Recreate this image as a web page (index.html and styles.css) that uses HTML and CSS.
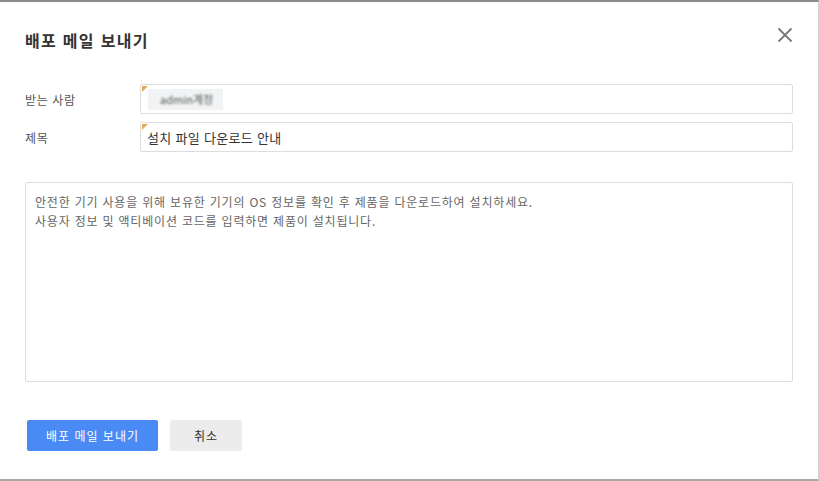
FILE: index.html
```html
<!DOCTYPE html>
<html lang="ko">
  <head>
    <title>배포 메일 보내기</title>
    <meta charset="utf-8">
    <meta name="viewport" content="width=device-width, initial-scale=1.0">
    <link rel="stylesheet" href="styles.css">
  </head>
  <body>
    <div class="dialog">
      <div class="dialog-header">
        <h2>배포 메일 보내기</h2>
        <button class="close-button" aria-label="닫기">
          <svg width="16" height="16" viewBox="0 0 16 16">
            <path d="M1.5 1.5 L14.5 14.5 M14.5 1.5 L1.5 14.5" stroke="#777" stroke-width="1.8" fill="none"/>
          </svg>
        </button>
      </div>

      <div class="form">
        <div class="form-row">
          <label>받는 사람</label>
          <div class="field">
            <span class="recipient"><span class="masked">admin계정</span></span>
          </div>
        </div>
        <div class="form-row">
          <label>제목</label>
          <div class="field">설치 파일 다운로드 안내</div>
        </div>
      </div>

      <div class="message">
        <p>안전한 기기 사용을 위해 보유한 기기의 OS 정보를 확인 후 제품을 다운로드하여 설치하세요.</p>
        <p>사용자 정보 및 액티베이션 코드를 입력하면 제품이 설치됩니다.</p>
      </div>

      <div class="dialog-buttons">
        <button class="btn primary">배포 메일 보내기</button>
        <button class="btn secondary">취소</button>
      </div>
    </div>
  </body>
</html>
```

FILE: styles.css
```css
* {
  margin: 0;
  padding: 0;
  box-sizing: border-box;
}

body {
  font-family: "Noto Sans CJK KR", "Noto Sans", sans-serif;
  background: #fff;
  width: 819px;
  height: 481px;
  overflow: hidden;
}

.dialog {
  height: 481px;
  border-top: 2px solid #8c8c8c;
  border-bottom: 2px solid #a8a8a8;
  border-right: 1px solid #d0d0d0;
  padding: 28px 25px 0 25px;
  background: #fff;
}

.dialog-header {
  display: flex;
  align-items: center;
  justify-content: space-between;
  height: 20px;
}

.dialog-header h2 {
  font-size: 16px;
  font-weight: 700;
  color: #333;
  line-height: 20px;
  letter-spacing: 1.3px;
}

.close-button {
  background: none;
  border: none;
  width: 16px;
  height: 16px;
  margin-top: -10px;
  cursor: pointer;
}

.form {
  margin-top: 34px;
  display: flex;
  flex-direction: column;
  gap: 8px;
}

.form-row {
  display: flex;
  align-items: center;
}

.form-row label {
  width: 115px;
  font-size: 12px;
  color: #555;
  letter-spacing: 0.6px;
}

.field {
  flex: 1;
  height: 30px;
  border: 1px solid #ddd;
  border-radius: 2px;
  position: relative;
  display: flex;
  align-items: center;
  padding-left: 6px;
  font-size: 13px;
  color: #333;
  letter-spacing: 0.3px;
}

/* orange corner marker for required fields */
.field::before {
  content: '';
  position: absolute;
  top: 1px;
  left: 1px;
  border-top: 6px solid #e2aa5c;
  border-right: 6px solid transparent;
}

.recipient {
  display: inline-block;
  background: #f1f3f4;
  height: 21px;
  line-height: 21px;
  padding: 0 10px 0 12px;
  margin-left: 1px;
  font-size: 11px;
  letter-spacing: 0;
}

/* recipient address is masked */
.recipient .masked {
  display: inline-block;
  color: #555;
  filter: blur(1.3px);
}

.message {
  margin-top: 30px;
  height: 200px;
  border: 1px solid #ddd;
  border-radius: 2px;
  padding: 9px 9px;
  font-size: 12px;
  line-height: 19px;
  color: #666;
  letter-spacing: 0.8px;
}

.dialog-buttons {
  margin-top: 38px;
  margin-left: 2px;
  display: flex;
  gap: 12px;
}

.btn {
  height: 31px;
  border: none;
  border-radius: 2px;
  font-family: inherit;
  font-size: 12px;
  letter-spacing: 1px;
  cursor: pointer;
}

.btn.primary {
  width: 131px;
  background: #4a8af4;
  color: #fff;
}

.btn.secondary {
  width: 72px;
  background: #ececec;
  color: #333;
}
```
